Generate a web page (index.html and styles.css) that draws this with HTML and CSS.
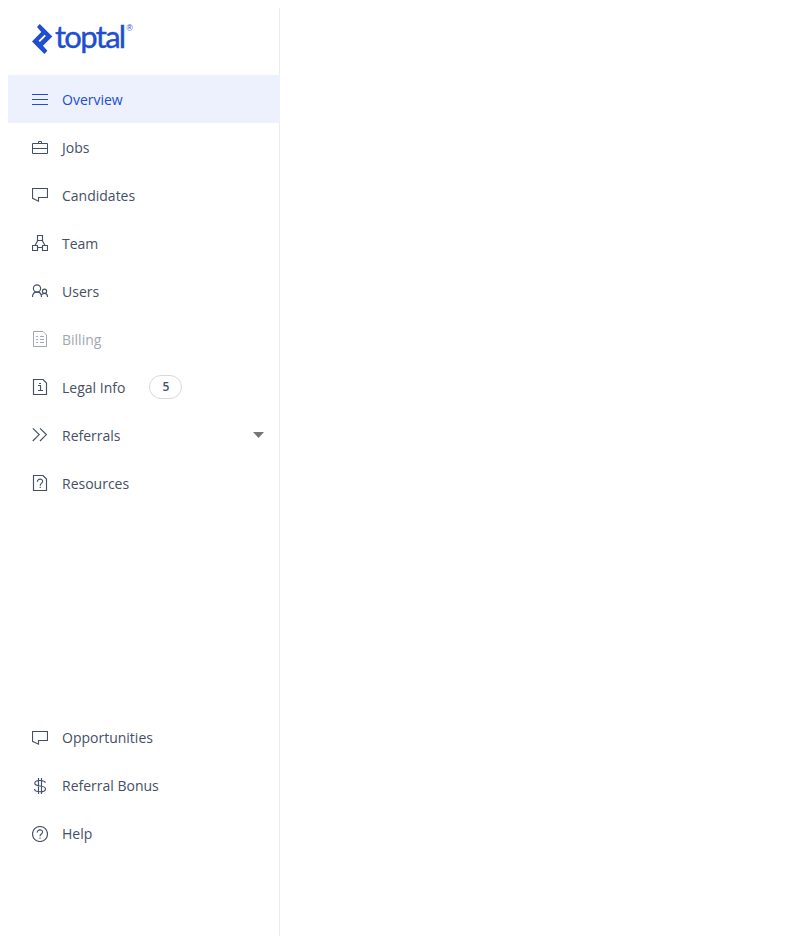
FILE: index.html
```html
<!DOCTYPE html>
<html lang="en">
<head>
<meta charset="utf-8">
<title>Overview</title>
<link rel="stylesheet" href="styles.css">
</head>
<body>
<aside class="sidebar">
  <a class="logo" aria-label="toptal">
    <svg width="102" height="34" viewBox="0 0 102 34">
      <path class="mark" fill-rule="evenodd" d="M7.800 0L20.300 12.500L11 21.800L15.400 26.800L12.400 30L0 17.400L9.300 8.100L5 3Z M12.500 10.700L6.500 16.700L7.900 18.100L13.900 12.100Z"/>
      <text class="wordmark" x="23" y="23.500" textLength="71.200">toptal</text>
      <text class="registered" x="94.500" y="7">®</text>
    </svg>
  </a>
  <nav class="menu primary">
    <a class="item active"><svg class="icon crisp" viewBox="0 0 16 16"><path d="M0 3.500h16M0 8.500h16M0 13.500h16"/></svg><span>Overview</span></a>
    <a class="item"><svg class="icon crisp" viewBox="0 0 16 16"><path d="M.5 4.500h15v10H.5zM.5 9.500h15M6.500 4.500v-2h3v2"/></svg><span>Jobs</span></a>
    <a class="item"><svg class="icon" viewBox="0 0 16 16"><path d="M.5 1.500h15v9h-9v3.700L.5 11.300z"/></svg><span>Candidates</span></a>
    <a class="item"><svg class="icon" viewBox="0 0 16 16"><path d="M5.500.5h5v5h-5zM.5 10.500h5v5h-5zM10.500 10.500h5v5h-5zM5.500 12.500h5M5.800 5.500L3 10.500M10.200 5.500L13 10.500"/></svg><span>Team</span></a>
    <a class="item"><svg class="icon" viewBox="0 0 16 16"><circle cx="5" cy="5.500" r="3.600"/><circle cx="12.500" cy="8.200" r="2.100"/><path d="M.5 14c0-3 2-4.900 4.500-4.900S9.500 11 9.500 14M9.800 11.700c.5-1 1.500-1.400 2.700-1.400 2 0 3 1.500 3 3.700"/></svg><span>Users</span></a>
    <a class="item disabled"><svg class="icon crisp" viewBox="0 0 16 16"><path d="M1.500.5h9.500l3.500 3.500v11.500h-13zM4 5.500h2M8 5.500h4M4 8.500h2M8 8.500h4M4 11.500h2M8 11.500h4"/></svg><span>Billing</span></a>
    <a class="item"><svg class="icon" viewBox="0 0 16 16"><path d="M1.500.5h9.500l3.500 3.500v11.500h-13zM7 4.500h2M6 6.500h2.500v5M6 11.500h5"/></svg><span>Legal Info</span><b class="badge">5</b></a>
    <a class="item"><svg class="icon" viewBox="0 0 16 16"><path d="M.8 1.300l6.400 6.300L.8 14M8 1.300l6.400 6.300L8 14"/></svg><span>Referrals</span><svg class="caret" viewBox="0 0 11 6"><path d="M0 0h11L5.500 6z"/></svg></a>
    <a class="item"><svg class="icon" viewBox="0 0 16 16"><path d="M1.500.5h9.500l3.500 3.500v11.500h-13zM5.400 6.800C5.200 3.300 10.700 3.300 10.600 6.400 10.500 8.300 8.200 8 8.200 10.700M8.200 11.700v1.300"/></svg><span>Resources</span></a>
  </nav>
  <nav class="menu secondary">
    <a class="item"><svg class="icon" viewBox="0 0 16 16"><path d="M.5 1.500h15v9h-9v3.700L.5 11.300z"/></svg><span>Opportunities</span></a>
    <a class="item"><svg class="icon" viewBox="0 0 16 16"><path d="M13.300 4.800C13 3 11.500 2.500 8 2.500c-3.500 0-5.200.8-5.200 2.800C2.800 7.500 5 7.700 8 8s5.500.7 5.500 2.900c0 2.100-2 2.800-5.500 2.800-3.700 0-5.300-.8-5.500-2.700M6.500 0v16M9.500 0v16"/></svg><span>Referral Bonus</span></a>
    <a class="item"><svg class="icon" viewBox="0 0 16 16"><circle cx="8" cy="8" r="7.500"/><path d="M5.300 6.600C5.100 3 10.700 3 10.600 6.100 10.500 8.100 8 7.800 8 10.300M8 11.400v1.300"/></svg><span>Help</span></a>
  </nav>
</aside>
</body>
</html>
```

FILE: styles.css
```css
body {
  margin: 8px;
  background: #fff;
  font-family: "Open Sans", sans-serif;
}

.sidebar {
  display: flex;
  flex-direction: column;
  box-sizing: border-box;
  width: 272px;
  height: 928px;
  padding-bottom: 78.5px;
  box-shadow: inset -1px 0 #ebecee;
}

.logo {
  display: block;
  height: 51px;
  padding: 16px 24px 0;
}

.logo svg {
  display: block;
  overflow: visible;
}

.mark,
.wordmark,
.registered {
  fill: #204ecf;
}

.wordmark {
  font-family: Lato, sans-serif;
  font-size: 31px;
  stroke: #204ecf;
  stroke-width: .4px;
}

.registered {
  font-family: "Liberation Sans", sans-serif;
  font-size: 8.5px;
}

.menu {
  display: flex;
  flex-direction: column;
}

.primary span {
  padding-top: 2px;
}

.secondary {
  margin-top: auto;
}

.item {
  display: flex;
  align-items: center;
  height: 48px;
  box-sizing: border-box;
  padding: 0 16px 0 24px;
  color: #455065;
  font-size: 14px;
  line-height: 22px;
}

.active {
  background: #edf0fd;
  color: #204ecf;
}

.disabled {
  color: #a2a7b2;
}

.icon {
  width: 16px;
  height: 16px;
  margin-right: 14px;
  fill: none;
  stroke: currentColor;
  stroke-width: 1.15;
}

.crisp {
  stroke-width: 1;
}

.badge {
  box-sizing: border-box;
  width: 33px;
  height: 24px;
  margin-left: 24px;
  border: 1px solid #d8d9dc;
  border-radius: 12px;
  font-size: 12px;
  font-weight: 600;
  line-height: 22px;
  text-align: center;
}

.caret {
  width: 11px;
  height: 6px;
  margin-left: auto;
  fill: #757575;
}
```
